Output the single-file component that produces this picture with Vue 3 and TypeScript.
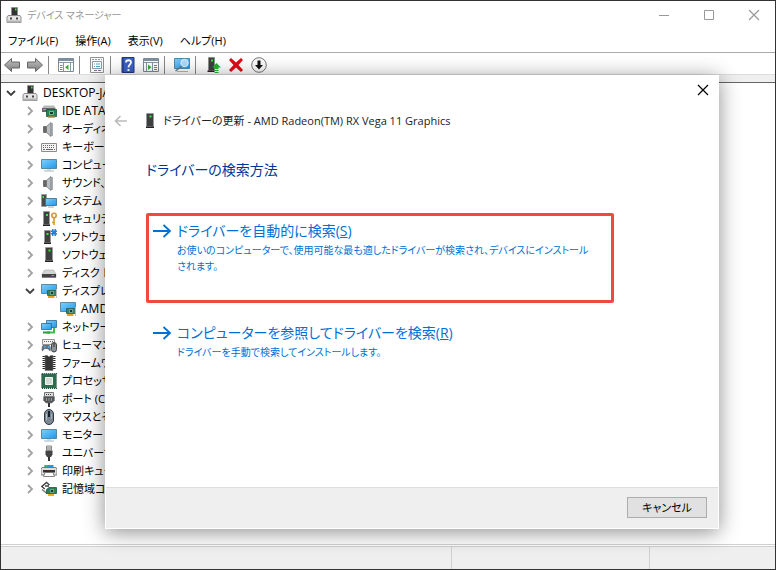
<script setup lang="ts">
interface TreeNode {
  label: string
  icon: string
  level: number
  state?: 'open' | 'closed'
  latin?: boolean
}

interface ToolItem {
  icon: string
  label: string
}

const menus: string[] = ['ファイル(F)', '操作(A)', '表示(V)', 'ヘルプ(H)']

const toolGroups: ToolItem[][] = [
  [
    { icon: 'back', label: '戻る' },
    { icon: 'forward', label: '進む' },
  ],
  [{ icon: 'pane-left', label: 'コンソール ツリーの表示' }],
  [{ icon: 'properties', label: 'プロパティ' }],
  [
    { icon: 'help', label: 'ヘルプ' },
    { icon: 'pane-right', label: '操作ウィンドウの表示' },
  ],
  [{ icon: 'scan', label: 'ハードウェア変更のスキャン' }],
  [
    { icon: 'update', label: 'ドライバーの更新' },
    { icon: 'remove', label: 'デバイスのアンインストール' },
    { icon: 'disable', label: 'デバイスを無効にする' },
  ],
]

const nodes: TreeNode[] = [
  { label: 'DESKTOP-JA', icon: 'host', level: 0, state: 'open', latin: true },
  { label: 'IDE ATA/ATAPI', icon: 'ide', level: 1, state: 'closed', latin: true },
  { label: 'オーディオの', icon: 'speaker', level: 1, state: 'closed' },
  { label: 'キーボード', icon: 'keyboard', level: 1, state: 'closed' },
  { label: 'コンピューター', icon: 'monitor', level: 1, state: 'closed' },
  { label: 'サウンド、', icon: 'speaker', level: 1, state: 'closed' },
  { label: 'システム デ', icon: 'system', level: 1, state: 'closed' },
  { label: 'セキュリティ', icon: 'security', level: 1, state: 'closed' },
  { label: 'ソフトウェア', icon: 'component', level: 1, state: 'closed' },
  { label: 'ソフトウェア', icon: 'tower', level: 1, state: 'closed' },
  { label: 'ディスク ド', icon: 'disk', level: 1, state: 'closed' },
  { label: 'ディスプレイ', icon: 'display', level: 1, state: 'open' },
  { label: 'AMD', icon: 'display', level: 2, latin: true },
  { label: 'ネットワーク', icon: 'network', level: 1, state: 'closed' },
  { label: 'ヒューマン', icon: 'hid', level: 1, state: 'closed' },
  { label: 'ファームウェア', icon: 'firmware', level: 1, state: 'closed' },
  { label: 'プロセッサ', icon: 'cpu', level: 1, state: 'closed' },
  { label: 'ポート (COM', icon: 'port', level: 1, state: 'closed' },
  { label: 'マウスとそ', icon: 'mouse', level: 1, state: 'closed' },
  { label: 'モニター', icon: 'monitor', level: 1, state: 'closed' },
  { label: 'ユニバーサ', icon: 'usb', level: 1, state: 'closed' },
  { label: '印刷キュー', icon: 'printer', level: 1, state: 'closed' },
  { label: '記憶域コ', icon: 'storage', level: 1, state: 'closed' },
]
</script>

<template>
  <svg class="sprite" aria-hidden="true">
    <defs>
      <linearGradient id="screen" x1="0" y1="0" x2="1" y2="1">
        <stop offset="0" stop-color="#7fd0fb" />
        <stop offset="1" stop-color="#1f97ea" />
      </linearGradient>
      <linearGradient id="metal" x1="0" y1="0" x2="0" y2="1">
        <stop offset="0" stop-color="#c4c4c4" />
        <stop offset="1" stop-color="#7c7c7c" />
      </linearGradient>
      <symbol id="host" viewBox="0 0 16 16">
        <path d="M5.500 .5h6v8h-6z" fill="#333" stroke="#8a8a8a" stroke-width=".6" />
        <path d="M9 1.500h1.500v2H9z" fill="#3be03b" />
        <path d="M2 8.500h12l1 1.500v5.500H1V10z" fill="#e4e4e4" stroke="#777" stroke-width=".8" />
        <path d="M1.500 13.500h13v2h-13z" fill="#b4b4b4" />
        <path d="M4 10.500h2v2H4zM10 10.500h2v2h-2z" fill="#444" />
      </symbol>
      <symbol id="tower" viewBox="0 0 16 16">
        <path d="M4.500 .5h7v13h-7z" fill="#3d3f40" stroke="#999" stroke-width=".7" />
        <path d="M4 13.500h8V15H4z" fill="#222" />
        <path d="M7.500 2.500h2v2h-2z" fill="#2df52d" />
      </symbol>
      <symbol id="ide" viewBox="0 0 16 16">
        <path d="M3 2.500h10l2 3v3H1v-3z" fill="#b7b7b7" />
        <path d="M1 5h13v4H1z" fill="#666" />
        <path d="M2 6h3v1H2z" fill="#42e642" />
        <path d="M5.500 6.500h10v7h-10z" fill="#23865b" stroke="#12593c" stroke-width=".8" />
        <path d="M8.500 8.500h4v3h-4z" fill="#1a3d2d" stroke="#9ddab7" stroke-width=".7" />
        <path d="M7 13.500h7V15H7z" fill="#e5a52c" />
      </symbol>
      <symbol id="speaker" viewBox="0 0 16 16">
        <path d="M2.500 5.500h3v6h-3z" fill="#666" stroke="#444" stroke-width=".6" />
        <path d="M5.500 5.500 10 1.500v14l-4.500-4z" fill="#b8bec2" stroke="#666" stroke-width=".7" />
        <path d="M11 2v13" stroke="#8a9196" stroke-width="1.500" />
      </symbol>
      <symbol id="keyboard" viewBox="0 0 16 16">
        <path d="M.5 4.500h15v8H.5z" fill="#f4f4f4" stroke="#8c8c8c" />
        <path d="M2 6.500h12M2 8.500h12" stroke="#666" stroke-dasharray="1 1" />
        <path d="M2 10.500h2m1 0h7m1 0h1" stroke="#666" />
      </symbol>
      <symbol id="monitor" viewBox="0 0 16 16">
        <path d="M.5 2.500h15v9H.5z" fill="url(#screen)" stroke="#42758e" stroke-width=".8" />
        <path d="M6 12h4v1.500H6z" fill="#d3dde2" />
        <path d="M3 14h10" stroke="#9db8c4" />
      </symbol>
      <symbol id="system" viewBox="0 0 16 16">
        <path d="M.5 1.500h5v12h-5z" fill="#4a4a4a" stroke="#999" stroke-width=".7" />
        <path d="M1.500 3h1.500v2H1.500z" fill="#42e642" />
        <path d="M4.500 5.500h11v7h-11z" fill="url(#screen)" stroke="#356b8b" stroke-width=".8" />
        <path d="M7 14h6" stroke="#9aabb4" />
      </symbol>
      <symbol id="security" viewBox="0 0 16 16">
        <path d="M2.500 .5h6v13h-6z" fill="#3d3f40" stroke="#999" stroke-width=".7" />
        <path d="M2 13.500h7V15H2z" fill="#222" />
        <path d="M5 3h2v2H5z" fill="#2df52d" />
        <circle cx="13" cy="4.500" r="2.200" fill="none" stroke="#d59a28" stroke-width="1.600" />
        <path d="M13 7v7m-2-2.500h2" stroke="#d59a28" stroke-width="1.600" />
      </symbol>
      <symbol id="component" viewBox="0 0 16 16">
        <path d="M3.500 1.500h6v12h-6z" fill="#3d3f40" stroke="#999" stroke-width=".7" />
        <path d="M3 13.500h7V15H3z" fill="#222" />
        <path d="M5.500 4h2v2h-2z" fill="#2df52d" />
        <path d="M11 0h1.500v1.500h1V0H15v1.500h1V3h-1v1h1v1.500h-1V7h-1.500V5.500h-1V7H11V5.500h-1V4h1V3h-1V1.500h1z" fill="#2782d1" />
      </symbol>
      <symbol id="disk" viewBox="0 0 16 16">
        <path d="m3.500 5-2.500 4v3.500h14V9l-2.500-4z" fill="#d4d4d4" stroke="#aaa" stroke-width=".6" />
        <path d="M1 9h14v3.500H1z" fill="#444" />
        <path d="M10.500 10.500h2.500" stroke="#3ce33c" />
      </symbol>
      <symbol id="display" viewBox="0 0 16 16">
        <path d="M.5 1.500h15v9H.5z" fill="url(#screen)" stroke="#42758e" stroke-width=".8" />
        <path d="M6.500 7.500h9v5h-9z" fill="#388068" stroke="#265d4d" stroke-width=".8" />
        <path d="M9.500 8.500h3v3h-3z" fill="#183a30" stroke="#a1cdbd" stroke-width=".6" />
        <path d="M7 13h6.500v2H7z" fill="#e3a02b" />
        <path d="M15.500 6v9" stroke="#bdbdbd" />
      </symbol>
      <symbol id="network" viewBox="0 0 16 16">
        <path d="M5.500 1.500h10v7h-10z" fill="url(#screen)" stroke="#286890" stroke-width=".8" />
        <path d="M.5 4.500h10v6H.5z" fill="url(#screen)" stroke="#286890" stroke-width=".8" />
        <path d="M6 13.500h7V9" fill="none" stroke="#3fbd4b" stroke-width="2" />
        <path d="M2 13.500h7" stroke="#2e9a3d" stroke-width="2" />
      </symbol>
      <symbol id="hid" viewBox="0 0 16 16">
        <path d="M1.500 2.500h12v5h-12z" fill="#f3f3f3" stroke="#969696" />
        <path d="M3 4.500h9" stroke="#666" stroke-dasharray="1 1" />
        <path d="M1 14c-1-3 .5-7 2.500-6h3c2.500-1 4 3 3 6-1 1-2-2-3.500-2H4c-1 0-2 3-3 2z" fill="#66717b" />
        <path d="M3 9h1.500v2H3zM7 9h1.500v2H7z" fill="#4ca9e8" />
        <rect x="10.500" y="5.500" width="5" height="9.500" rx="2.500" fill="#8a949b" stroke="#444" />
        <path d="M13 6v4" stroke="#333" />
      </symbol>
      <symbol id="firmware" viewBox="0 0 16 16">
        <path d="M3 1v14M13 1v14" stroke="#222" stroke-width="3" stroke-dasharray="1 1" />
        <path d="M4 .5h2.500L8 2 9.500 .5H12v15H4z" fill="#353535" stroke="#777" stroke-width=".6" />
      </symbol>
      <symbol id="cpu" viewBox="0 0 16 16">
        <path d="M.8 .8h14.400v14.400H.8z" fill="#38765b" stroke="#174f36" stroke-width="1.500" stroke-dasharray="1 1" />
        <path d="M2 2h12v12H2z" fill="#2a6c4b" />
        <path d="M4.500 4.500h7v7h-7z" fill="#d4dad6" stroke="#f2f5f3" />
      </symbol>
      <symbol id="port" viewBox="0 0 16 16">
        <path d="M3.500 1.500h9v4h-9z" fill="#ddd" stroke="#777" />
        <path d="M5 3.500h6" stroke="#333" stroke-dasharray="1 1" />
        <path d="M2.500 5.500h11v4L11 12H5L2.500 9.500z" fill="#515558" stroke="#888" stroke-width=".6" />
        <path d="M5.500 7v3M8 7v3m2.500-3v3" stroke="#999" />
        <path d="M8 12v4" stroke="#333" stroke-width="2" />
      </symbol>
      <symbol id="mouse" viewBox="0 0 16 16">
        <rect x="3.500" y=".5" width="9" height="15" rx="4.500" fill="#7b8894" stroke="#303840" />
        <path d="M5.500 5v6" stroke="#b3bfca" />
        <path d="M8 2v6" stroke="#121e29" stroke-width="2" />
        <path d="M10.500 5v5" stroke="#a0acb8" />
      </symbol>
      <symbol id="usb" viewBox="0 0 16 16">
        <path d="M5.500 1h5v4h-5z" fill="#ddd" stroke="#888" />
        <path d="M6.500 3h1m1 0h1" stroke="#333" />
        <path d="M4.500 5.500h7v4L10 12H6L4.500 9.500z" fill="#444" />
        <path d="M8 12v4" stroke="#333" stroke-width="2" />
      </symbol>
      <symbol id="printer" viewBox="0 0 16 16">
        <path d="M3.500 2h9v4h-9z" fill="#1f9de0" />
        <path d="M3.500 2h3v4h-3z" fill="#35b86d" />
        <path d="M1 4.500h14l1 2V12H0V6.500z" fill="#ddd" stroke="#666" stroke-width=".8" />
        <path d="M2 7h12v2.500H2z" fill="#333" />
        <path d="m4 9.500-1.500 4h11L12 9.500z" fill="#fff" stroke="#666" stroke-width=".8" />
      </symbol>
      <symbol id="storage" viewBox="0 0 16 16">
        <path d="M8.500 4 5.500 1.500.8 5.500l3 2.500M4 5h4" fill="none" stroke="#444" stroke-width="1.500" />
        <path d="m1 8.500 5 4" stroke="#777" stroke-width="1.500" />
        <path d="M5.500 8.500 8 6.500h7.500v6h-10z" fill="#2a8058" stroke="#14573c" stroke-width=".8" />
        <path d="M9.500 8.500h3v3h-3z" fill="#14392d" stroke="#9ed4b8" stroke-width=".6" />
        <path d="M7 13h6v2H7z" fill="#efaa24" />
      </symbol>
      <symbol id="back" viewBox="0 0 16 16">
        <path d="m.5 8 7-6.500V5h8v6h-8v3.500z" fill="url(#metal)" stroke="#666" />
      </symbol>
      <symbol id="forward" viewBox="0 0 16 16">
        <path d="m15.500 8-7-6.500V5h-8v6h8v3.500z" fill="url(#metal)" stroke="#666" />
      </symbol>
      <symbol id="pane-left" viewBox="0 0 16 16">
        <path d="M.5 1.500h15v13H.5z" fill="#fff" stroke="#7b8b98" />
        <path d="M1 3h14" stroke="#7e90a0" stroke-width="2" />
        <path d="M1 5.500h14" stroke="#8597a5" />
        <path d="M5.500 6v8M12.500 6v8" stroke="#8597a5" />
        <path d="M2 8.500h2.500m-2.500 2h2.500m-2.500 2h2.500" stroke="#5d8ca5" />
        <path d="m10.500 7.500-3.500 2.800 3.500 2.700z" fill="#3daa35" />
      </symbol>
      <symbol id="pane-right" viewBox="0 0 16 16">
        <path d="M.5 1.500h15v13H.5z" fill="#fff" stroke="#7b8b98" />
        <path d="M1 3h14" stroke="#7e90a0" stroke-width="2" />
        <path d="M1 5.500h14M9.500 6v8M3.500 6v8" stroke="#8597a5" />
        <path d="M11 8.500h3m-3 2h3m-3 2h3" stroke="#5d8ca5" />
        <path d="m5 7.500 3.500 2.800L5 13z" fill="#3daa35" />
      </symbol>
      <symbol id="properties" viewBox="0 0 16 16">
        <path d="M1.500 .5h13v15h-13z" fill="#fafafa" stroke="#929292" />
        <path d="M3.500 4.500h9v7h-9z" fill="#fff" stroke="#8b9ba7" />
        <path d="M3 2.500h10" stroke="#8b9ba7" stroke-dasharray="2 1" />
        <path d="M5 7h1m1 0h4M5 9.500h1m1 0h4" stroke="#4faac1" />
        <path d="M5 13.500h3m1 0h3" stroke="#777" />
      </symbol>
      <symbol id="help" viewBox="0 0 16 16">
        <path d="M2 .5h12v15H2z" fill="#3c61c8" stroke="#20387c" />
        <path d="M3 1v14" stroke="#26428f" stroke-width="1.500" />
        <path d="M6 5.500C6 2.500 11 2.500 11 5.500c0 2-2.500 2-2.500 5" fill="none" stroke="#fff" stroke-width="1.800" />
        <path d="M7.500 12h2v2h-2z" fill="#fff" />
      </symbol>
      <symbol id="scan" viewBox="0 0 16 16">
        <path d="M.5 1.500h15v10H.5z" fill="url(#screen)" stroke="#4b8cae" />
        <path d="M3 14.500h11" stroke="#a9b9c2" />
        <circle cx="10.500" cy="6" r="3.700" fill="#a6def9" stroke="#e0f4fd" />
        <path d="m8 9-6.500 5" stroke="#6c7980" stroke-width="1.500" />
      </symbol>
      <symbol id="update" viewBox="0 0 16 16">
        <path d="M3.500 .5h6v13h-6z" fill="#3d3f40" stroke="#888" stroke-width=".7" />
        <path d="M2.500 13.500h7V15h-7z" fill="#222" />
        <path d="M6 2.500h2v2H6z" fill="#2df52d" />
        <path d="m11.500 6-4.500 4.500h2.500V12h4v-1.500H16z" fill="#24b52b" />
        <path d="M9.500 13h4v1h-4zM9.500 15h4v1h-4z" fill="#24b52b" />
      </symbol>
      <symbol id="remove" viewBox="0 0 16 16">
        <path d="M1 3 3 1l5 4.500L13 1l2 2-4.500 5 4.500 5-2 2-5-4.500L3 15l-2-2 4.500-5z" fill="#e10b17" />
      </symbol>
      <symbol id="disable" viewBox="0 0 16 16">
        <circle cx="8" cy="8" r="7.300" fill="#fafafa" stroke="#777" />
        <path d="M6.500 3.500h3V8H12l-4 4.500L4 8h2.500z" fill="#111" />
      </symbol>
      <symbol id="open" viewBox="0 0 12 12">
        <path d="m2 4 4 4 4-4" fill="none" stroke="#404040" stroke-width="1.800" />
      </symbol>
      <symbol id="closed" viewBox="0 0 12 12">
        <path d="m4 2 4 4-4 4" fill="none" stroke="#a2a2a2" stroke-width="1.800" />
      </symbol>
      <symbol id="arrow" viewBox="0 0 20 16">
        <path d="M1 8h17M11.500 2l6.500 6-6.500 6" fill="none" stroke="currentColor" stroke-width="1.800" />
      </symbol>
      <symbol id="cross" viewBox="0 0 12 12">
        <path d="m1 1 10 10M11 1 1 11" fill="none" stroke="currentColor" stroke-width="1.200" />
      </symbol>
    </defs>
  </svg>

  <div class="window">
    <header class="titlebar">
      <svg class="icon"><use href="#host" /></svg>
      <h1 class="window-title">デバイス マネージャー</h1>
      <div class="window-buttons">
        <button type="button" aria-label="最小化">
          <svg class="glyph" viewBox="0 0 12 12"><path d="M1 6.500h10" stroke="currentColor" /></svg>
        </button>
        <button type="button" aria-label="最大化">
          <svg class="glyph" viewBox="0 0 12 12"><path d="M1.500 1.500h9v9h-9z" fill="none" stroke="currentColor" /></svg>
        </button>
        <button type="button" aria-label="閉じる">
          <svg class="glyph"><use href="#cross" /></svg>
        </button>
      </div>
    </header>

    <nav class="menubar">
      <button v-for="menu in menus" :key="menu" type="button">{{ menu }}</button>
    </nav>

    <div class="toolbar" role="toolbar">
      <div v-for="(group, index) in toolGroups" :key="index" class="tool-group">
        <button v-for="tool in group" :key="tool.icon" type="button" :aria-label="tool.label">
          <svg class="icon"><use :href="`#${tool.icon}`" /></svg>
        </button>
      </div>
    </div>

    <main class="tree-pane">
      <ul class="tree" role="tree">
        <li
          v-for="(node, index) in nodes"
          :key="index"
          role="treeitem"
          :class="['node', `level-${node.level}`, { latin: node.latin }]"
        >
          <svg class="glyph"><use v-if="node.state" :href="`#${node.state}`" /></svg>
          <svg class="icon"><use :href="`#${node.icon}`" /></svg>
          <span>{{ node.label }}</span>
        </li>
      </ul>
    </main>

    <footer class="statusbar">
      <span></span>
      <span></span>
      <span></span>
    </footer>

    <section class="dialog" role="dialog" aria-labelledby="wizard-title">
      <div class="dialog-top">
        <button class="dialog-close" type="button" aria-label="閉じる">
          <svg class="glyph"><use href="#cross" /></svg>
        </button>
      </div>
      <div class="dialog-head">
        <button class="dialog-back" type="button" aria-label="戻る">
          <svg viewBox="0 0 14 12"><path d="M13 6H1.500M6.500 1l-5 5 5 5" fill="none" stroke="currentColor" stroke-width="1.600" /></svg>
        </button>
        <div class="dialog-caption">
          <svg class="icon"><use href="#tower" /></svg>
          <h2 id="wizard-title">ドライバーの更新 - AMD Radeon(TM) RX Vega 11 Graphics</h2>
        </div>
      </div>
      <div class="dialog-body">
        <h3>ドライバーの検索方法</h3>
        <button class="choice highlighted" type="button">
          <svg class="choice-arrow"><use href="#arrow" /></svg>
          <span class="choice-text">
            <span class="choice-title">ドライバーを自動的に検索(<u>S</u>)</span>
            <span class="choice-note">お使いのコンピューターで、使用可能な最も適したドライバーが検索され、デバイスにインストール<br />されます。</span>
          </span>
        </button>
        <button class="choice" type="button">
          <svg class="choice-arrow"><use href="#arrow" /></svg>
          <span class="choice-text">
            <span class="choice-title">コンピューターを参照してドライバーを検索(<u>R</u>)</span>
            <span class="choice-note">ドライバーを手動で検索してインストールします。</span>
          </span>
        </button>
      </div>
      <div class="dialog-foot">
        <button class="cancel" type="button">キャンセル</button>
      </div>
    </section>
  </div>
</template>

<style>
body {
  background: #fff;
}
</style>

<style scoped>
.sprite {
  position: absolute;
  width: 0;
  height: 0;
}

.window {
  position: relative;
  display: flex;
  flex-direction: column;
  height: 100vh;
  overflow: hidden;
  box-sizing: border-box;
  outline: 1px solid #333;
  outline-offset: -1px;
  background: #fff;
  color: #000;
  font-family: "Open Sans", "Noto Sans CJK JP", sans-serif;
  font-size: 11px;
  line-height: 18px;
  font-feature-settings: "palt", "kern";
}

button {
  margin: 0;
  padding: 0;
  border: 0;
  background: none;
  color: inherit;
  font: inherit;
  font-feature-settings: inherit;
}

h1,
h2,
h3 {
  margin: 0;
  font-weight: 400;
}

.icon {
  flex: none;
  display: block;
  width: 16px;
  height: 16px;
}

.glyph {
  flex: none;
  display: block;
  width: 12px;
  height: 12px;
}

.titlebar {
  display: flex;
  align-items: center;
  flex: none;
  height: 29px;
  padding-left: 6px;
  gap: 5px;
}

.window-title {
  flex: 1;
  font-size: 10px;
  color: #999;
}

.window-buttons {
  display: flex;
  color: #999;
}

.window-buttons button {
  display: grid;
  place-items: center;
  width: 45px;
  height: 28px;
}

.menubar {
  display: flex;
  flex: none;
  align-items: center;
  gap: 17px;
  height: 23px;
  padding-left: 8px;
  border-bottom: 1px solid #aaa;
}

.menubar button {
  white-space: nowrap;
}

.toolbar {
  display: flex;
  flex: none;
  box-sizing: border-box;
  height: 22px;
  padding-top: 2px;
  align-items: center;
}

.tool-group {
  display: flex;
}

.tool-group + .tool-group {
  margin-left: 2px;
  padding-left: 5px;
  border-left: 1px solid #888;
}

.tool-group button {
  display: grid;
  place-items: center;
  width: 23px;
  height: 18px;
}

.tree-pane {
  flex: 1;
  min-height: 0;
  overflow: hidden;
  border-top: 7px solid #efefef;
  box-shadow: inset 0 1px #666, 0 -1px #ddd;
}

.tree {
  margin: 0;
  padding: 2px 0 0;
  list-style: none;
}

.node {
  display: flex;
  align-items: center;
  gap: 5px;
  height: 18px;
  padding-left: 5px;
  white-space: nowrap;
}

.latin {
  font-size: 12px;
}

.level-1 {
  padding-left: 24px;
}

.level-2 {
  padding-left: 43px;
}

.statusbar {
  display: grid;
  grid-template-columns: 450fr 197fr 126fr;
  flex: none;
  height: 23px;
  padding-top: 2px;
  border-top: 1px solid #d0d0d0;
  background: linear-gradient(#fff 1px, #d0d0d0 1px, #d0d0d0 2px, #efefef 2px);
}

.statusbar span {
  border-right: 1px solid #d0d0d0;
}

.dialog {
  position: absolute;
  top: 75px;
  right: 57px;
  bottom: 41px;
  left: 105px;
  display: flex;
  flex-direction: column;
  box-sizing: border-box;
  border: 1px solid #fff;
  background: #fff;
  box-shadow: 0 3px 20px rgba(0, 0, 0, 0.45);
}

.dialog-top {
  display: flex;
  justify-content: flex-end;
}

.dialog-close {
  display: grid;
  place-items: center;
  width: 30px;
  height: 28px;
}

.dialog-head {
  display: flex;
  align-items: center;
  gap: 14px;
  height: 34px;
  padding-left: 8px;
}

.dialog-back {
  width: 14px;
  height: 12px;
  color: #bbb;
}

.dialog-back svg {
  display: block;
}

.dialog-caption {
  display: flex;
  align-items: center;
  gap: 5px;
}

.dialog-head h2 {
  font-size: 11px;
  color: #222;
}

.dialog-body {
  display: flex;
  flex: 1;
  flex-direction: column;
  padding: 20px 104px 0 40px;
}

.dialog-body h3 {
  margin-bottom: 31px;
  font-size: 14px;
  line-height: 24px;
  color: #003399;
}

.choice {
  display: flex;
  align-items: flex-start;
  gap: 5px;
  padding: 4px 0 4px 3px;
  border: 3px solid transparent;
  border-radius: 2px;
  color: #0070d6;
  text-align: left;
}

.highlighted {
  min-height: 90px;
  margin-bottom: 12px;
  border-color: #f04a3e;
}

.choice-arrow {
  flex: none;
  width: 20px;
  height: 16px;
  margin-top: 3px;
}

.choice-text {
  display: flex;
  flex-direction: column;
}

.choice-title {
  font-size: 14px;
  line-height: 22px;
}

.choice-note {
  font-size: 10px;
  line-height: 16px;
  white-space: nowrap;
}

.dialog-foot {
  display: flex;
  justify-content: flex-end;
  padding: 9px 11px 10px;
  border-top: 1px solid #ddd;
  background: #efefef;
}

.cancel {
  width: 80px;
  height: 21px;
  border: 1px solid #adadad;
  background: #e1e1e1;
}
</style>
